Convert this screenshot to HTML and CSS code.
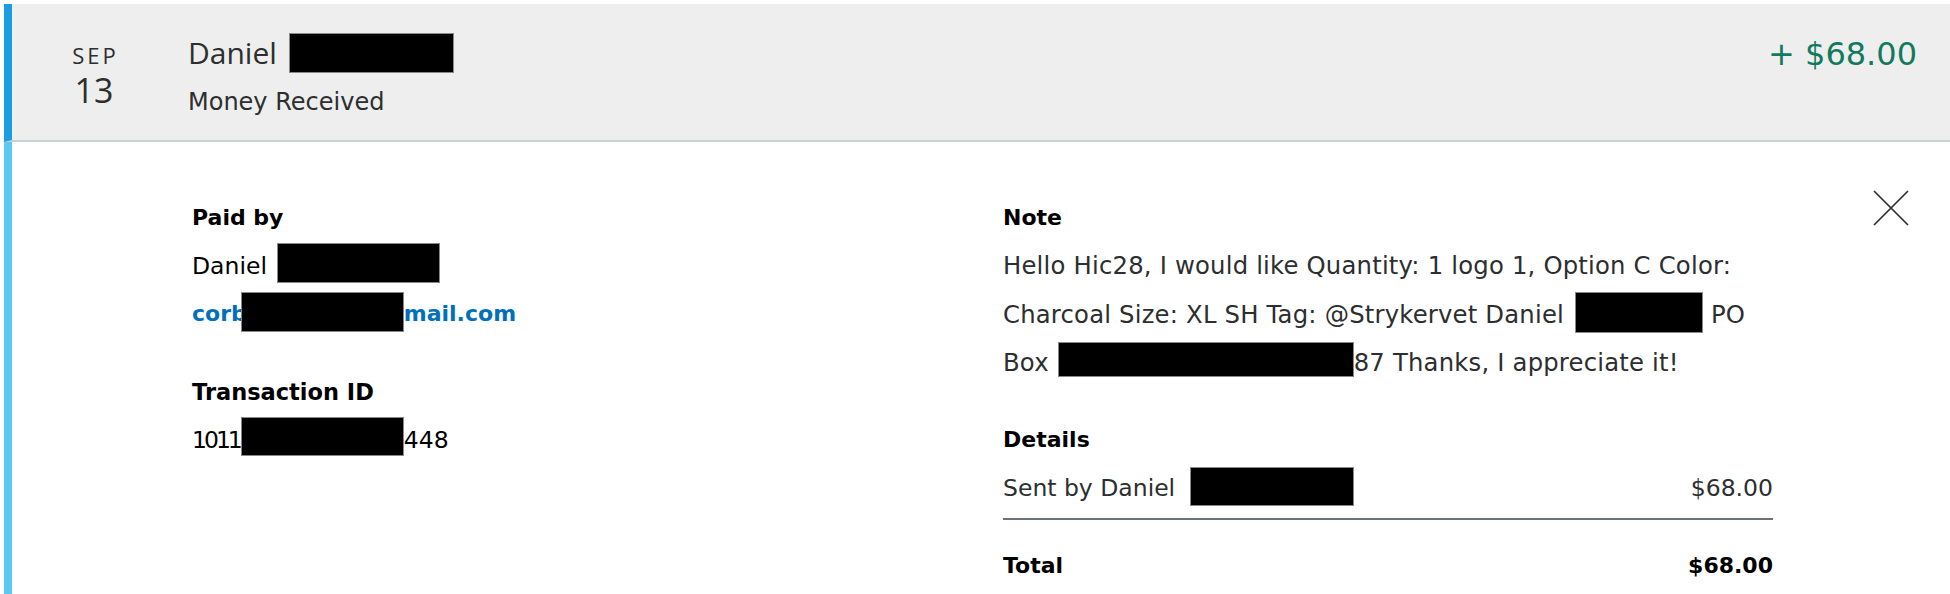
FILE: index.html
```html
<!DOCTYPE html>
<html lang="en">
<head>
<meta charset="utf-8">
<title>Transaction</title>
<link rel="stylesheet" href="styles.css">
</head>
<body>
<div class="card">
  <div class="head">
    <div class="date">
      <div class="month">SEP</div>
      <div class="day">13</div>
    </div>
    <div class="who">
      <div class="name">Daniel <span class="redact r-head"></span></div>
      <div class="kind">Money Received</div>
    </div>
    <div class="amount">+ $68.00</div>
  </div>
  <div class="body">
    <div class="col-left">
      <div class="label">Paid by</div>
      <div class="value">Daniel <span class="redact r-name"></span></div>
      <div class="value email">corb<span class="redact r-mail"></span>mail.com</div>
      <div class="label gap">Transaction ID</div>
      <div class="value"><span class="tight">1011</span><span class="redact r-tx"></span>448</div>
    </div>
    <div class="col-right">
      <div class="label">Note</div>
      <div class="note">Hello Hic28, I would like Quantity: 1 logo 1, Option C Color:<br>Charcoal Size: XL SH Tag: @Strykervet Daniel <span class="redact r-note1"></span> PO<br>Box <span class="redact r-note2"></span>87 Thanks, I appreciate it!</div>
      <div class="label gap-r">Details</div>
      <div class="row line">
        <span>Sent by Daniel <span class="redact r-sent"></span></span>
        <span>$68.00</span>
      </div>
      <div class="row total">
        <span>Total</span>
        <span>$68.00</span>
      </div>
    </div>
    <div class="close">
      <svg width="36" height="36" viewBox="0 0 36 36"><path d="M1 1 L35 35 M35 1 L1 35" stroke="#2c2e2f" stroke-width="1.7" fill="none"/></svg>
    </div>
  </div>
</div>
</body>
</html>
```

FILE: styles.css
```css
html, body {
  margin: 0;
  padding: 0;
  background: #ffffff;
}
body {
  padding: 4px 0 0 4px;
  font-family: "DejaVu Sans", "Open Sans", sans-serif;
  color: #2c2e2f;
}
.card {
  height: 590px;
  display: flex;
  flex-direction: column;
}
.head {
  height: 136px;
  background: #eeeeee;
  border-left: 8px solid #1b9ddf;
  border-bottom: 2px solid #cbd2d6;
  display: flex;
  align-items: flex-start;
}
.date {
  width: 96px;
  margin-left: 34px;
  text-align: center;
  padding-top: 36px;
  font-family: "Open Sans", sans-serif;
}
.month {
  font-size: 22px;
  line-height: 30px;
  letter-spacing: 3px;
  padding-left: 3px;
}
.day {
  font-size: 34px;
  line-height: 40px;
}
.who {
  margin-left: 46px;
  padding-top: 27px;
}
.name {
  font-family: "Open Sans", sans-serif;
  font-size: 30px;
  line-height: 44px;
}
.kind {
  font-size: 24px;
  line-height: 40px;
  margin-top: 7px;
}
.amount {
  margin-left: auto;
  padding-top: 28px;
  padding-right: 33px;
  font-size: 32px;
  line-height: 44px;
  color: #117a5e;
}
.redact {
  display: inline-block;
  background: #000;
  border: 1px solid #888;
  box-sizing: border-box;
  height: 40px;
}
.r-head { width: 165px; margin-left: 4px; vertical-align: -9px; }
.body {
  flex: 1;
  border-left: 8px solid #5bc8f5;
  display: flex;
  align-items: flex-start;
  padding-top: 52px;
}
.col-left {
  width: 991px;
  padding-left: 180px;
  box-sizing: border-box;
  color: #000;
}
.col-right {
  width: 770px;
}
.label {
  font-size: 22px;
  font-weight: 700;
  line-height: 48px;
  color: #000;
}
.label.gap {
  margin-top: 30px;
  font-size: 22.5px;
}
.label.gap-r {
  margin-top: 28px;
}
.value {
  font-size: 23.5px;
  line-height: 48px;
  white-space: nowrap;
}
.email {
  color: #0070ba;
  font-weight: 700;
  font-size: 22px;
}
.tight {
  letter-spacing: -3px;
}
.r-name { width: 163px; margin-left: 3px; vertical-align: -9px; }
.r-mail { width: 163px; margin-left: -6px; vertical-align: -11px; }
.r-tx { width: 163px; height: 39px; margin-left: 1px; vertical-align: -8px; }
.note {
  font-size: 24.3px;
  line-height: 48.5px;
  letter-spacing: 0.2px;
  white-space: nowrap;
  color: #2c2e2f;
}
.r-note1 { width: 128px; height: 41px; margin-left: 3px; vertical-align: -10px; }
.r-note2 { width: 296px; height: 35px; margin-left: 1px; vertical-align: -6px; }
.r-sent { width: 164px; height: 39px; margin-left: 7px; vertical-align: -10px; }
.row {
  display: flex;
  justify-content: space-between;
  font-size: 23.5px;
  line-height: 48px;
  white-space: nowrap;
}
.row.line {
  padding-bottom: 6px;
  border-bottom: 2px solid #6c7378;
}
.row.total {
  margin-top: 22px;
  font-size: 22px;
  font-weight: 700;
  color: #000;
}
.close {
  margin-left: 100px;
  margin-top: -4px;
  line-height: 0;
}
```
